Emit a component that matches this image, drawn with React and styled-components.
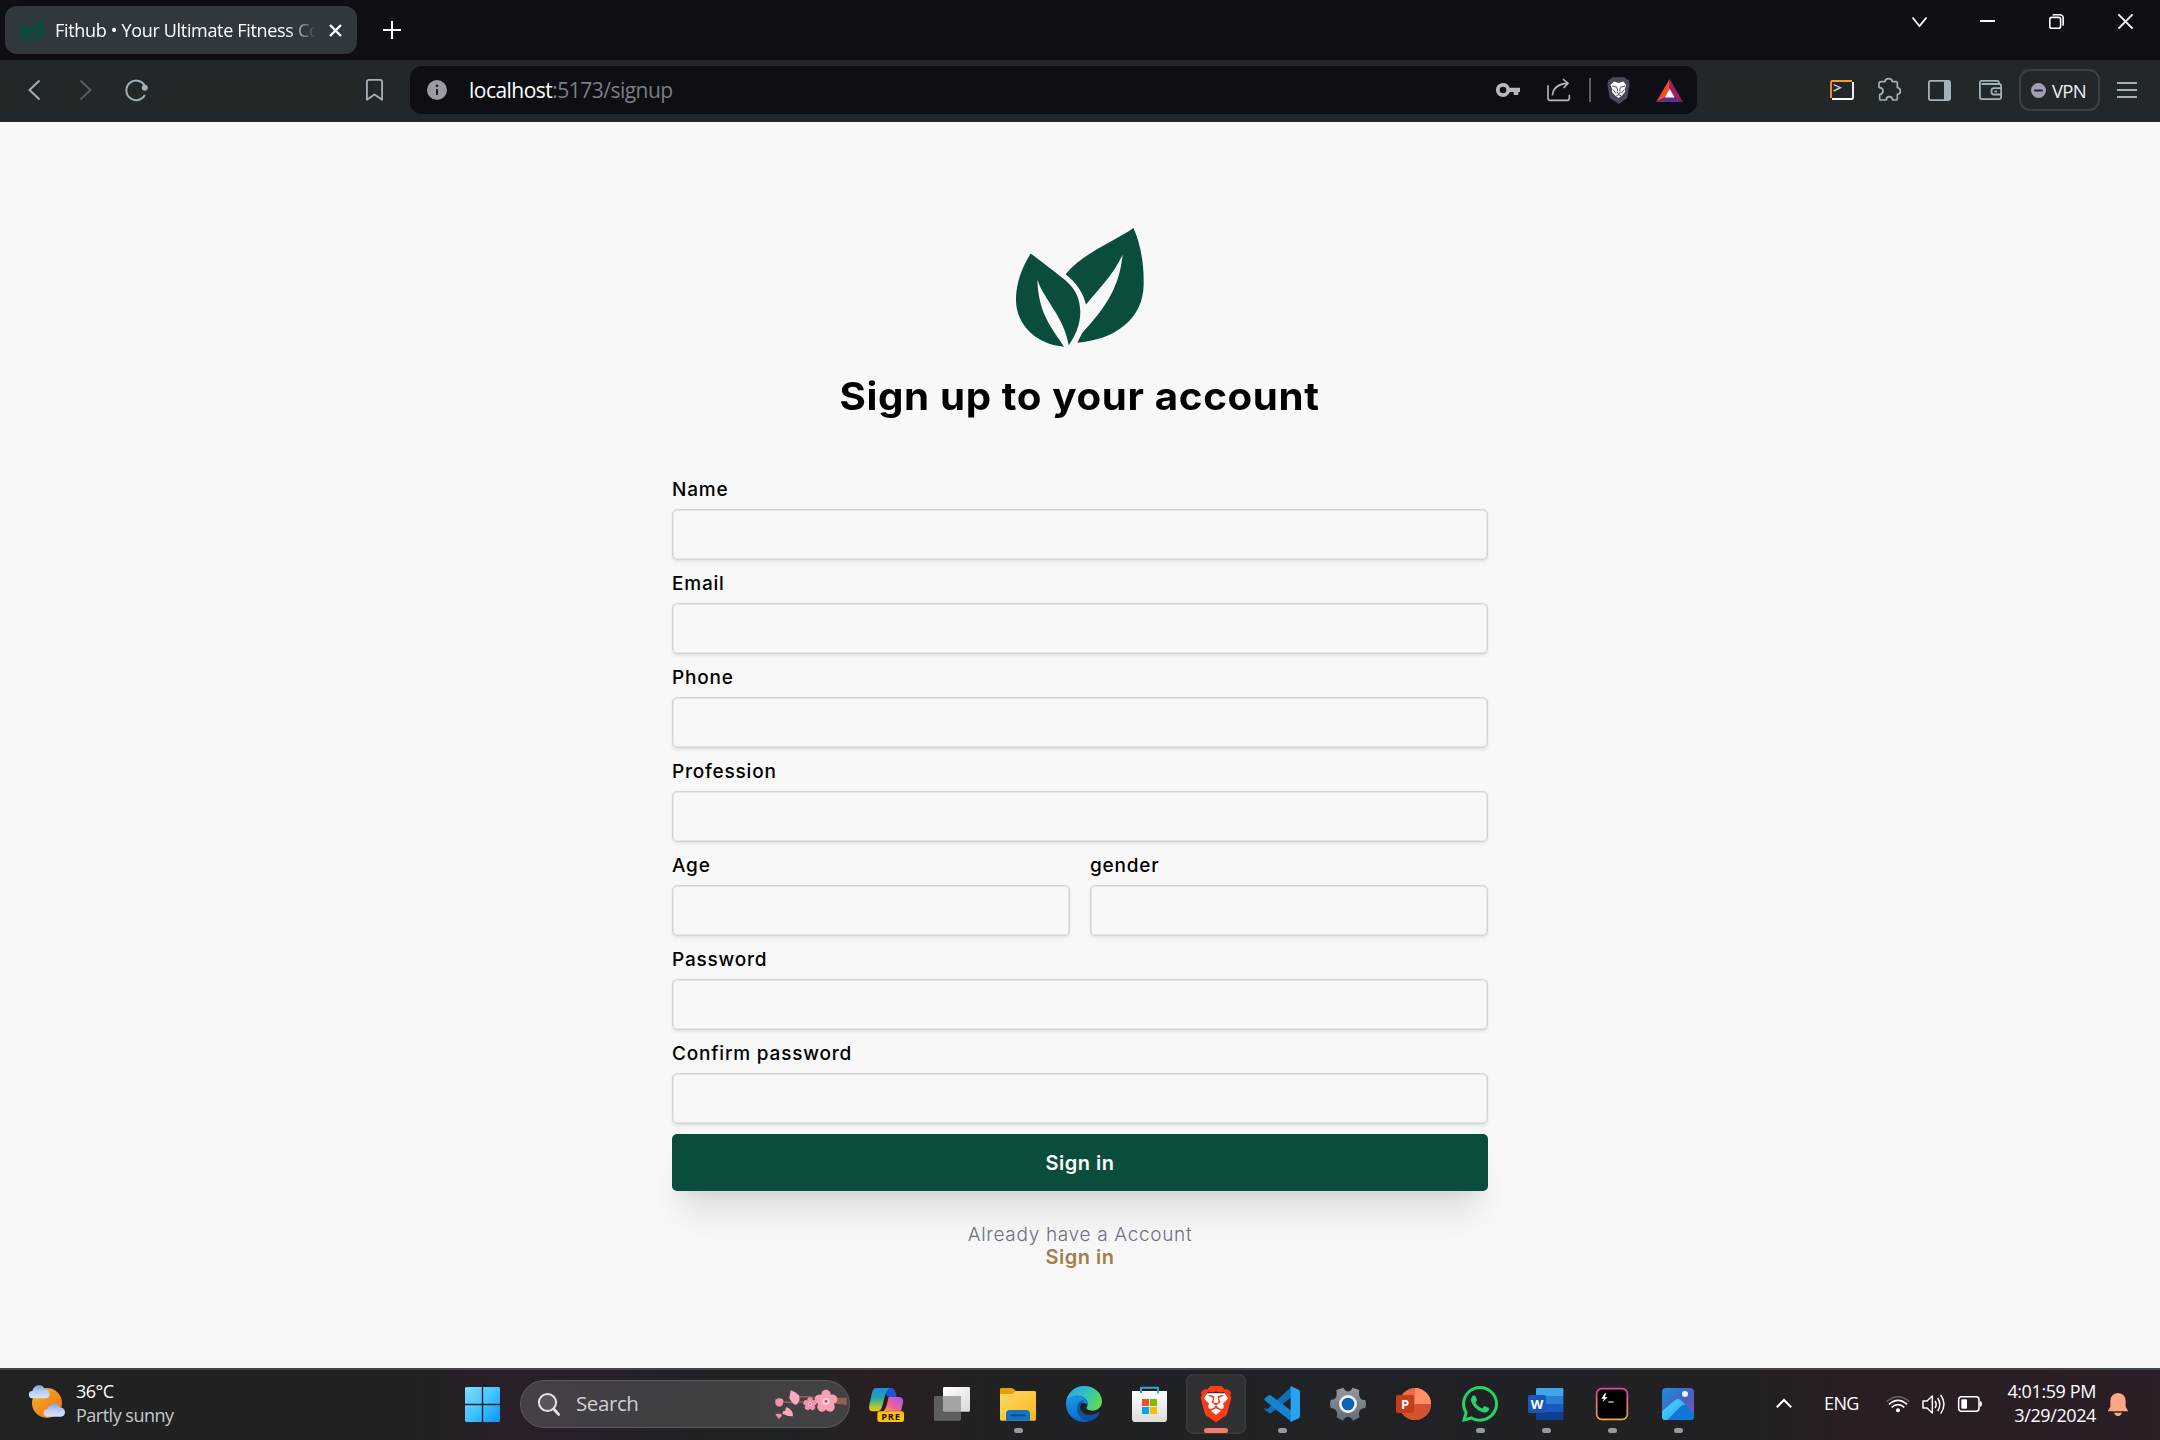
import React from 'react';
import styled, { createGlobalStyle } from 'styled-components';
import { SiBrave } from 'react-icons/si';
import { FaWhatsapp } from 'react-icons/fa';

const GlobalStyle = createGlobalStyle`
  * { box-sizing: border-box; }
  body { margin: 0; background: #f8f8f8; overflow: hidden; }
`;

const uiFont = `'Open Sans', 'Noto Sans', sans-serif`;
const pageFont = `Inter, 'Open Sans', sans-serif`;

const Screen = styled.div`
  width: 2160px;
  height: 1440px;
  display: flex;
  flex-direction: column;
  font-family: ${uiFont};
  overflow: hidden;
`;

const Icon = styled.svg`
  display: block;
  flex: none;
  width: ${p => p.$w}px;
  height: ${p => p.$h}px;
  margin-left: ${p => p.$ml || 0}px;
  margin-top: ${p => p.$mt || 0}px;
  overflow: visible;
  fill: none;
`;

/* ---------- Browser chrome ---------- */

const TabStrip = styled.header`
  height: 60px;
  flex: none;
  display: flex;
  align-items: flex-start;
  background: #0e0f14;
  padding: 6px 27px 0 5px;
`;

const Tab = styled.div`
  width: 352px;
  height: 48px;
  display: flex;
  align-items: center;
  background: #30383d;
  border-radius: 12px;
  padding-left: 14px;
`;

const TabTitle = styled.span`
  width: 262px;
  margin-left: 11px;
  font-size: 18px;
  line-height: 24px;
  letter-spacing: -0.33px;
  color: #fff;
  white-space: nowrap;
  mask-image: linear-gradient(to right, #000 232px, transparent 262px);
`;

const WindowButtons = styled.div`
  margin-left: auto;
  display: flex;
  align-items: flex-start;
`;

const Toolbar = styled.nav`
  height: 62px;
  flex: none;
  display: flex;
  align-items: center;
  background: #22272a;
  padding: 0 0 2px 28px;
`;

const AddressBar = styled.div`
  width: 1287px;
  height: 48px;
  margin-left: 27px;
  display: flex;
  align-items: center;
  background: #0e0f14;
  border-radius: 12px;
  padding-left: 17px;
`;

const Url = styled.div`
  width: 1027px;
  margin-left: 22px;
  font-size: 21px;
  line-height: 30px;
  letter-spacing: -0.52px;
  color: #7c7e83;
  white-space: nowrap;
`;

const Host = styled.span`
  color: #fff;
`;

const Separator = styled.i`
  width: 2px;
  height: 24px;
  margin-left: 18px;
  background: #5d5e62;
`;

const VpnButton = styled.div`
  width: 81px;
  height: 42px;
  margin-left: 17px;
  padding-left: 10px;
  display: flex;
  align-items: center;
  border: 2px solid #374146;
  border-radius: 11px;
  font-size: 18.5px;
  letter-spacing: -0.7px;
  color: #eef0f2;
`;

const VpnText = styled.span`
  margin-left: 6px;
`;

/* ---------- Page ---------- */

const Page = styled.main`
  height: 1246px;
  flex: none;
  display: flex;
  flex-direction: column;
  align-items: center;
  padding-top: 106px;
  background: #f8f8f8;
  font-family: ${pageFont};
`;

const Heading = styled.h1`
  margin: 25px 0 0;
  height: 48px;
  line-height: 48px;
  font-size: 38px;
  font-weight: 700;
  letter-spacing: 0.6px;
  color: #000;
  white-space: nowrap;
  transform: scaleX(1.06);
`;

const Form = styled.form`
  width: 816px;
  margin-top: 58px;
  display: flex;
  flex-direction: column;
`;

const FieldRow = styled.div`
  display: flex;
  gap: 20px;
`;

const Field = styled.label`
  width: 100%;
  height: 94px;
  display: flex;
  flex-direction: column;
  font-size: 19px;
  line-height: 24px;
  font-weight: 500;
  letter-spacing: 0.8px;
  color: #000;
  white-space: nowrap;
`;

const Input = styled.input`
  width: 100%;
  height: 51px;
  margin: 7px 0 0;
  border: 1px solid #d1d5db;
  border-radius: 5px;
  background: transparent;
  box-shadow: inset 0 0 0 1px rgba(209, 213, 219, 0.55), 0 1.5px 3px rgba(0, 0, 0, 0.08);
  outline: none;
`;

const Submit = styled.button`
  height: 57px;
  margin-top: -2px;
  padding: 0;
  border: 0;
  border-radius: 5px;
  background: #0b4d3c;
  color: #fff;
  font-family: ${pageFont};
  font-size: 20px;
  font-weight: 600;
  letter-spacing: 0.5px;
  box-shadow: 0 30px 38px -8px rgba(0, 0, 0, 0.1), 0 12px 15px -9px rgba(0, 0, 0, 0.1);
`;

const Footnote = styled.p`
  margin: 33px 0 0;
  display: flex;
  flex-direction: column;
  align-items: center;
  font-size: 19px;
  line-height: 22px;
  font-weight: 300;
  letter-spacing: 0.68px;
  color: #6b7280;
`;

const SignInLink = styled.a`
  font-size: 20px;
  font-weight: 600;
  letter-spacing: 0.5px;
  color: #a17f4d;
`;

/* ---------- Taskbar ---------- */

const Taskbar = styled.footer`
  height: 72px;
  flex: none;
  display: flex;
  align-items: flex-start;
  border-top: 2px solid #434244;
  background: linear-gradient(90deg, #202224 0%, #212123 19%, #291f28 23%, #281f2b 27%, #202224 33%, #202224 36%, #291f22 41%, #212124 46%, #202225 63%, #212124 79%, #291e24 86%, #2b1e26 100%);
  padding: 4px 31px 0 29px;
`;

const TwoLines = styled.div`
  width: ${p => p.$w}px;
  margin-left: ${p => p.$ml}px;
  margin-top: 5px;
  font-size: 18px;
  line-height: 24px;
  letter-spacing: ${p => p.$ls}px;
  text-align: ${p => p.$align || 'left'};
  color: #fff;
  white-space: nowrap;
`;

const Muted = styled.div`
  color: #c8c8c8;
`;

const SearchBox = styled.div`
  width: 330px;
  height: 48px;
  margin: 6px 0 0 20px;
  padding-left: 17px;
  display: flex;
  align-items: center;
  border: 1.5px solid #5b595d;
  border-radius: 24px;
  background: linear-gradient(90deg, #463e48, #403f42 50%, #424244);
`;

const SearchText = styled.span`
  width: 199px;
  margin: -2px 0 0 16px;
  font-size: 20.5px;
  line-height: 28px;
  letter-spacing: -0.4px;
  color: #cfcfd0;
`;

const Apps = styled.div`
  display: flex;
  margin-left: 3px;
`;

const Slot = styled.div`
  width: 60px;
  height: 60px;
  margin: 0 3px;
  display: flex;
  flex-direction: column;
  align-items: center;
  padding-top: 12px;
  border-radius: 7px;
  background: ${p => (p.$active ? '#2e3032' : 'transparent')};
  box-shadow: ${p => (p.$active ? 'inset 0 0 0 1.5px #383a3c' : 'none')};
`;

const Indicator = styled.i`
  width: ${p => (p.$active ? 24 : 9)}px;
  height: 5px;
  margin-top: 6px;
  border-radius: 2.5px;
  background: ${p => (p.$active ? '#f57c62' : '#9a9a9b')};
`;

const Language = styled.span`
  width: 40px;
  margin: 17px 0 0 32px;
  font-size: 18px;
  line-height: 24px;
  letter-spacing: -0.6px;
  color: #fff;
`;

const LEFT_LEAF = 'M212 161C185 205 168 250 168 300C168 380 235 435 312 440C280 390 235 345 232 240C255 305 312 350 326 436C345 410 361 375 361 335C359 265 318 245 285 217Z';
const RIGHT_LEAF = 'M520 85C470 122 370 158 317 223C348 248 370 278 378 314C410 275 460 225 488 165C478 260 440 320 366 400L352 428C460 420 552 360 551 250C552 195 542 130 520 85Z';

function LeafLogo({ w, h, ...rest }) {
  return (
    <Icon $w={w} $h={h} viewBox="168 85 384 356" preserveAspectRatio="none" {...rest}>
      <path d={LEFT_LEAF} fill="#0b4d3c" />
      <path d={RIGHT_LEAF} fill="#0b4d3c" />
    </Icon>
  );
}

const BigLogo = () => <LeafLogo w={128} h={119} />;

function BraveLion({ size, color, x, y }) {
  return (
    <>
      <path d={`M${x + size * 0.25} ${y + size * 0.2}h${size * 0.5}l${size * 0.14} ${size * 0.22}l${-size * 0.17} ${size * 0.3}l${-size * 0.22} ${size * 0.15}l${-size * 0.22} ${-size * 0.15}l${-size * 0.17} ${-size * 0.3}z`} fill="#fff" />
      <SiBrave x={x} y={y} size={size} color={color} />
    </>
  );
}

function Chrome() {
  return (
    <>
      <TabStrip>
        <Tab>
          <LeafLogo w={25} h={21} />
          <TabTitle>Fithub • Your Ultimate Fitness Co</TabTitle>
          <Icon $w={11} $h={11} $ml={13} viewBox="0 0 10 10">
            <path d="M0 0L10 10M10 0L0 10" stroke="#fff" strokeWidth="2.2" />
          </Icon>
        </Tab>
        <Icon $w={18} $h={18} $ml={26} $mt={15} viewBox="0 0 18 18">
          <path d="M9 0V18M0 9H18" stroke="#fff" strokeWidth="2" />
        </Icon>
        <WindowButtons>
          <Icon $w={15} $h={10} $mt={11} viewBox="0 0 15 10">
            <path d="M0.5 0.5L7.5 9L14.5 0.5" stroke="#fff" strokeWidth="1.8" />
          </Icon>
          <Icon $w={15} $h={2} $ml={53} $mt={14} viewBox="0 0 15 2">
            <path d="M0 1H15" stroke="#fff" strokeWidth="2" />
          </Icon>
          <Icon $w={15} $h={15} $ml={54} $mt={8} viewBox="0 0 15 15">
            <rect x=".8" y="3.4" width="10.8" height="10.8" rx="2" stroke="#fff" strokeWidth="1.6" />
            <path d="M3.6 1.2Q4.2 .8 5 .8H10.5Q14.2 .8 14.2 4.5V10Q14.2 10.9 13.7 11.6" stroke="#fff" strokeWidth="1.6" />
          </Icon>
          <Icon $w={15} $h={15} $ml={54} $mt={8} viewBox="0 0 15 15">
            <path d="M.4 .4L14.6 14.6M14.6 .4L.4 14.6" stroke="#fff" strokeWidth="1.8" />
          </Icon>
        </WindowButtons>
      </TabStrip>
      <Toolbar>
        <Icon $w={12} $h={20} viewBox="0 0 12 20">
          <path d="M11.5 .5L1.5 10L11.5 19.5" stroke="#a3b2ba" strokeWidth="1.9" />
        </Icon>
        <Icon $w={12} $h={20} $ml={40} viewBox="0 0 12 20">
          <path d="M.5 .5L10.5 10L.5 19.5" stroke="#545d62" strokeWidth="1.9" />
        </Icon>
        <Icon $w={23} $h={22} $ml={33} viewBox="0 0 23 22">
          <path d="M19.5 6.2A9.8 9.8 0 1 0 19.8 16" stroke="#a3b2ba" strokeWidth="2" />
          <circle cx="19.8" cy="8.8" r="3" fill="#a3b2ba" />
        </Icon>
        <Icon $w={17} $h={22} $ml={218} viewBox="0 0 17 22">
          <path d="M.9 20.8V3Q.9 .9 3 .9H14Q16.1 .9 16.1 3V20.8L8.5 15.5Z" stroke="#a3b2ba" strokeWidth="1.8" strokeLinejoin="round" />
        </Icon>
        <AddressBar>
          <Icon $w={20} $h={20} viewBox="0 0 20 20">
            <circle cx="10" cy="10" r="10" fill="#9a9ca3" />
            <path d="M10 9V15" stroke="#1c1d22" strokeWidth="2" />
            <circle cx="10" cy="5.8" r="1.3" fill="#1c1d22" />
          </Icon>
          <Url><Host>localhost</Host>:5173/signup</Url>
          <Icon $w={24} $h={14} viewBox="48 69 72 42">
            <path fillRule="evenodd" fill="#b9b9bb" d="M69 69a21 21 0 1 0 20 27h12v9h14V96h5V83H89A21 21 0 0 0 69 69ZM69 80a10 10 0 1 1 0 20a10 10 0 0 1 0-20Z" />
          </Icon>
          <Icon $w={24} $h={24} $ml={27} viewBox="202 56 72 72">
            <path d="M205 78V117Q205 123 211 123H263Q269 123 269 117V106M218 108Q222 74 264 72M250 59L265 72L252 86" stroke="#b9b9bb" strokeWidth="4.8" />
          </Icon>
          <Separator />
          <Icon $w={23} $h={27} $ml={16} viewBox="381 48 69 82">
            <path d="M397 49H434L440 55L447 57L449 72L442 112L416 130L389 112L382 72L384 57L391 55Z" fill="#48495b" />
            <path d="M402 62L415 66L430 62L439 72L434 85L436 92L426 104L416 112L405 104L395 92L397 85L391 72Z" fill="#fff" />
            <path d="M397 76L411 79M435 76L421 79M411 80L413 92M421 80L419 92M410 94L416 98L422 94M416 97V102M400 87L408 98M432 87L424 98M409 105L416 102L423 105" stroke="#48495b" strokeWidth="3" />
          </Icon>
          <Icon $w={27} $h={23} $ml={26} viewBox="529 53 81 70">
            <path d="M570 53L529 123L557 108L570 83Z" fill="#ff4724" />
            <path d="M570 53L610 123L583 108L570 83Z" fill="#9e1f63" />
            <path d="M529 123H610L583 108H557Z" fill="#662d91" />
            <path d="M570 83L585 109H555Z" fill="#fff" />
          </Icon>
        </AddressBar>
        <Icon $w={24} $h={20} $ml={133} viewBox="60 240 72 60">
          <path d="M63 294V247Q63 243 67 243H126" stroke="#fc9c1c" strokeWidth="5.5" />
          <path d="M129 246V293Q129 297 125 297H66" stroke="#fff" strokeWidth="5.5" />
          <path d="M71 254L91 263L71 273" stroke="#c4c7c9" strokeWidth="4.5" />
        </Icon>
        <Icon $w={24} $h={24} $ml={24} viewBox="204 236 72 72">
          <path d="M214 247H225Q226 238 236 238T247 247H258Q262 247 262 251V265Q271 266 271 275T262 285V298Q262 302 258 302H248Q247 292 238 292T229 302H213Q209 302 209 298V286Q219 284 219 275T207 264V251Q208 247 214 247Z" stroke="#a3b2ba" strokeWidth="5" strokeLinejoin="round" />
        </Icon>
        <Icon $w={23} $h={21} $ml={26} viewBox="0 0 23 21">
          <rect x=".9" y=".9" width="21.2" height="19.2" rx="1.5" stroke="#a3b2ba" strokeWidth="1.8" />
          <path d="M16 1H22V20H16Z" fill="#a3b2ba" />
        </Icon>
        <Icon $w={23} $h={20} $ml={28} viewBox="0 0 23 20">
          <path d="M20 4.2V3Q20 .9 18 .9H2.8Q.9 .9 .9 2.8V17Q.9 19.1 3 19.1H20Q22.1 19.1 22.1 17V6Q22.1 4 20 4H2.5M22 8.2H15Q12.5 8.2 12.5 10.7V12Q12.5 14.5 15 14.5H22M15.5 11.4H18" stroke="#a3b2ba" strokeWidth="1.8" />
        </Icon>
        <VpnButton>
          <Icon $w={15} $h={15} viewBox="0 0 15 15">
            <circle cx="7.5" cy="7.5" r="7.5" fill="#a09fb3" />
            <path d="M3.2 7.5H11.8" stroke="#22272a" strokeWidth="2" />
          </Icon>
          <VpnText>VPN</VpnText>
        </VpnButton>
        <Icon $w={20} $h={16} $ml={17} viewBox="0 0 20 16">
          <path d="M0 1H20M0 8H20M0 15H20" stroke="#a3b2ba" strokeWidth="1.8" />
        </Icon>
      </Toolbar>
    </>
  );
}

const TextField = ({ label, type = 'text' }) => (
  <Field>
    {label}
    <Input type={type} />
  </Field>
);

function Signup() {
  return (
    <Page>
      <BigLogo />
      <Heading>Sign up to your account</Heading>
      <Form>
        <TextField label="Name" />
        <TextField label="Email" />
        <TextField label="Phone" />
        <TextField label="Profession" />
        <FieldRow>
          <TextField label="Age" />
          <TextField label="gender" />
        </FieldRow>
        <TextField label="Password" type="password" />
        <TextField label="Confirm password" type="password" />
        <Submit type="button">Sign in</Submit>
      </Form>
      <Footnote>
        Already have a Account
        <SignInLink>Sign in</SignInLink>
      </Footnote>
    </Page>
  );
}

/* Each taskbar drawing sits on a 108-unit square canvas. */
const APPS = [
  {
    name: 'copilot',
    art: (
      <>
        <defs>
          <linearGradient id="cpA" x1="0" y1="0" x2="0" y2="1"><stop offset="0" stopColor="#1b8be8" /><stop offset=".45" stopColor="#2aa6a0" /><stop offset=".8" stopColor="#a5c83c" /><stop offset="1" stopColor="#ffc400" /></linearGradient>
          <linearGradient id="cpB" x1="1" y1="0" x2="0" y2="1"><stop offset="0" stopColor="#a05af0" /><stop offset=".6" stopColor="#f0609a" /><stop offset="1" stopColor="#ff9a50" /></linearGradient>
        </defs>
        <path d="M40 6H72Q82 8 86 33H62L58 30Z" fill="#1e56d8" />
        <path d="M24 6H66Q56 10 52 26L42 62Q38 76 26 76H14Q0 76 4 56L12 20Q16 6 24 6Z" fill="url(#cpA)" />
        <path d="M62 33H92Q108 34 105 50L99 76H46Q52 72 56 58Z" fill="url(#cpB)" />
        <rect x="28" y="76" width="80" height="32" rx="7" fill="#ffc20a" />
        <text x="69" y="102" textAnchor="middle" fontFamily="Open Sans, sans-serif" fontWeight="700" fontSize="28" letterSpacing="2.5" fill="#1a1400">PRE</text>
      </>
    ),
  },
  {
    name: 'task view',
    art: (
      <>
        <defs><linearGradient id="tv" x1="0" y1="0" x2="1" y2="1"><stop offset="0" stopColor="#fff" /><stop offset="1" stopColor="#d9d9d9" /></linearGradient></defs>
        <rect x="27" y="3" width="81" height="74" rx="4" fill="url(#tv)" />
        <rect x="0" y="30" width="81" height="74" rx="4" fill="#5e5e60" />
        <path d="M27 30H77Q81 30 81 34V77H31Q27 77 27 73Z" fill="#a4a4a5" />
      </>
    ),
  },
  {
    name: 'explorer',
    dot: true,
    art: (
      <>
        <defs><linearGradient id="fo" x1="0" y1="0" x2="1" y2="1"><stop offset="0" stopColor="#ffd966" /><stop offset="1" stopColor="#f9b81c" /></linearGradient></defs>
        <path d="M0 10Q0 6 4 6H34Q38 6 42 10L48 15V40H0Z" fill="#e3a008" />
        <path d="M0 24H34Q38 24 42 20L47 15H104Q108 15 108 19V100Q108 104 104 104H4Q0 104 0 100Z" fill="url(#fo)" />
        <path d="M18 104V84Q18 72 30 72H78Q90 72 90 84V104Z" fill="#1373c4" />
        <path d="M34 88H74" stroke="#0b4a8a" strokeWidth="5" strokeLinecap="round" />
      </>
    ),
  },
  {
    name: 'edge',
    art: (
      <>
        <defs>
          <linearGradient id="egA" x1="0" y1=".2" x2="1" y2=".5"><stop offset="0" stopColor="#2aa8e6" /><stop offset=".55" stopColor="#2fc3c0" /><stop offset="1" stopColor="#62d84e" /></linearGradient>
          <linearGradient id="egB" x1="0" y1="0" x2=".4" y2="1"><stop offset="0" stopColor="#1a9de8" /><stop offset="1" stopColor="#0a68cc" /></linearGradient>
        </defs>
        <path d="M0 52A54 54 0 0 1 54 0C88 0 108 24 108 46C108 64 94 74 80 74C68 74 60 70 62 64C68 56 66 40 48 32C30 24 8 32 0 52Z" fill="url(#egA)" />
        <path d="M0 52C6 34 26 26 44 31C58 36 66 46 64 60C58 46 44 48 42 62C40 84 62 100 84 96C74 104 64 108 54 108A54 54 0 0 1 0 52Z" fill="url(#egB)" />
        <path d="M42 62C42 82 64 92 84 84L98 78C102 78 102 82 98 86C88 100 74 106 62 106C44 98 30 82 34 62C36 50 46 42 54 44C46 48 42 54 42 62Z" fill="#12509e" />
      </>
    ),
  },
  {
    name: 'store',
    art: (
      <>
        <defs><linearGradient id="st" x1="0" y1="0" x2="0" y2="1"><stop offset="0" stopColor="#fff" /><stop offset="1" stopColor="#dcdcdc" /></linearGradient></defs>
        <path d="M0 15H105V98Q105 108 95 108H10Q0 108 0 98Z" fill="url(#st)" />
        <path d="M27 22V5H78V22" stroke="#2ea6de" strokeWidth="6" strokeLinejoin="round" />
        <path d="M30 39H51V60H30Z" fill="#f25022" />
        <path d="M54 39H75V60H54Z" fill="#7fba00" />
        <path d="M30 63H51V84H30Z" fill="#00a4ef" />
        <path d="M54 63H75V84H54Z" fill="#ffb900" />
      </>
    ),
  },
  { name: 'brave', dot: true, active: true, art: <BraveLion x={0} y={0} size={108} color="#fb3b16" /> },
  {
    name: 'vscode',
    dot: true,
    art: (
      <>
        <path d="M9 70L78 6L82 0V34L22 80Q18 84 14 80L3 72Q-1 69 3 65Z" fill="#0f6fb5" />
        <path d="M3 36L14 28Q18 25 22 29L82 74V108L76 102L3 44Q-1 40 3 36Z" fill="#1484cf" />
        <path d="M80 0L104 11Q108 13 108 18V90Q108 95 104 97L80 108Z" fill="#29a3f0" />
      </>
    ),
  },
  {
    name: 'settings',
    art: (
      <>
        <defs><linearGradient id="ge" x1="0" y1="0" x2="0" y2="1"><stop offset="0" stopColor="#93999f" /><stop offset="1" stopColor="#626c76" /></linearGradient></defs>
        <path d="M40 5Q46 16 54 16T68 5L88 12Q85 30 92 38Q98 44 106 41Q110 54 106 66Q96 66 90 72Q84 82 89 94L70 104Q62 92 54 92T38 104L20 94Q24 80 17 72Q10 66 2 66Q-2 54 2 41Q12 42 17 36Q22 28 19 12Z" fill="url(#ge)" />
        <circle cx="54" cy="54" r="27" fill="#eef0f2" />
        <circle cx="54" cy="54" r="19" fill="#0b63b4" />
      </>
    ),
  },
  {
    name: 'powerpoint',
    art: (
      <>
        <circle cx="57" cy="54" r="48" fill="#ed6c47" />
        <path d="M57 6A48 48 0 0 1 105 54H57Z" fill="#ff8f6b" />
        <path d="M9 54A48 48 0 0 0 105 54Z" fill="#d35230" />
        <rect x="0" y="27" width="54" height="54" rx="5" fill="#c43e1c" />
        <text x="27" y="68" textAnchor="middle" fontFamily="Open Sans, sans-serif" fontWeight="700" fontSize="39" fill="#fff">P</text>
      </>
    ),
  },
  { name: 'whatsapp', dot: true, art: <FaWhatsapp x={-8} y={-8} size={124} color="#25d366" /> },
  {
    name: 'word',
    dot: true,
    art: (
      <>
        <path d="M28 6H102Q106 6 106 10V30H24V10Q24 6 28 6Z" fill="#41a5ee" />
        <path d="M24 30H106V54H24Z" fill="#2b7cd3" />
        <path d="M24 54H106V78H24Z" fill="#185abd" />
        <path d="M24 78H106V98Q106 102 102 102H28Q24 102 24 98Z" fill="#103f91" />
        <rect x="0" y="27" width="54" height="54" rx="5" fill="#1a56b8" />
        <text x="27" y="68" textAnchor="middle" fontFamily="Open Sans, sans-serif" fontWeight="700" fontSize="39" fill="#fff">W</text>
      </>
    ),
  },
  {
    name: 'hyper',
    dot: true,
    art: (
      <>
        <defs><linearGradient id="hy" x1="0" y1="0" x2="0" y2="1"><stop offset="0" stopColor="#ee3fb0" /><stop offset="1" stopColor="#f6a63a" /></linearGradient></defs>
        <rect x="8" y="8" width="92" height="92" rx="15" fill="#000" stroke="url(#hy)" strokeWidth="5" />
        <path d="M33 22L22 38H30L25 49L41 34H32L37 22Z" fill="#fff" />
        <path d="M43 48H59" stroke="#c8c8c8" strokeWidth="4" />
      </>
    ),
  },
  {
    name: 'photos',
    dot: true,
    art: (
      <>
        <defs>
          <linearGradient id="ph" x1="0" y1="0" x2="1" y2="1"><stop offset="0" stopColor="#1a90dc" /><stop offset=".55" stopColor="#4a5fc0" /><stop offset="1" stopColor="#8a56b0" /></linearGradient>
          <linearGradient id="pm" x1="0" y1="0" x2="1" y2="1"><stop offset="0" stopColor="#4bd5ff" /><stop offset="1" stopColor="#2aa6f0" /></linearGradient>
        </defs>
        <rect x="6" y="6" width="96" height="96" rx="12" fill="url(#ph)" />
        <path d="M20 102L62 62Q72 54 82 62L102 82V92Q102 102 92 102Z" fill="#0f78d4" />
        <path d="M6 76L46 42Q54 36 62 42L76 56Q68 56 60 63L22 102H16Q6 102 6 92Z" fill="url(#pm)" />
        <circle cx="75" cy="24" r="9" fill="#e8f4fb" />
      </>
    ),
  },
];

const Blossom = ({ x, y, r, color = '#f8a3b8' }) => (
  <g transform={`translate(${x} ${y})`}>
    {[0, 72, 144, 216, 288].map(a => (
      <ellipse key={a} cx="0" cy={-r * 0.58} rx={r * 0.42} ry={r * 0.45} fill={color} transform={`rotate(${a})`} />
    ))}
    <circle r={r * 0.3} fill="#fde3ec" />
    <circle r={r * 0.14} fill="#e0466c" />
  </g>
);

function WindowsTaskbar() {
  return (
    <Taskbar>
      <Icon $w={36} $h={33} $mt={11} viewBox="87 75 108 99">
        <defs>
          <linearGradient id="sun" x1="0" y1="0" x2="1" y2="1"><stop offset="0" stopColor="#f9b52c" /><stop offset="1" stopColor="#ec6a10" /></linearGradient>
          <linearGradient id="cloud" x1="0" y1="0" x2="0" y2="1"><stop offset="0" stopColor="#7fa2e0" /><stop offset=".5" stopColor="#bccff2" /><stop offset="1" stopColor="#d7e3f8" /></linearGradient>
        </defs>
        <circle cx="141" cy="129" r="45" fill="url(#sun)" />
        <path d="M98 115A11 11 0 0 1 97 93Q101 76 118 76Q130 77 134 87Q149 88 149 102Q148 115 137 115Z" fill="url(#cloud)" />
        <path d="M142 170A11 11 0 0 1 142 148Q146 131 164 131Q176 132 179 142Q195 143 195 157Q194 170 182 170Z" fill="url(#cloud)" />
      </Icon>
      <TwoLines $w={111} $ml={11} $ls={-0.5}>
        <div>36°C</div>
        <Muted>Partly sunny</Muted>
      </TwoLines>
      <Icon $w={35} $h={35} $ml={278} $mt={13} viewBox="0 0 35 35">
        <defs><linearGradient id="win" gradientUnits="userSpaceOnUse" x1="0" y1="0" x2="35" y2="35"><stop offset="0" stopColor="#85dcff" /><stop offset=".5" stopColor="#42c4ff" /><stop offset="1" stopColor="#0894fb" /></linearGradient></defs>
        <path d="M1 0H16.8V16.8H0V1ZM18.2 0H34L35 1V16.8H18.2ZM0 18.2H16.8V35H1L0 34ZM18.2 18.2H35V34L34 35H18.2Z" fill="url(#win)" />
      </Icon>
      <SearchBox>
        <Icon $w={22} $h={23} viewBox="0 0 22 23">
          <circle cx="9.5" cy="9.5" r="8.6" stroke="#e4e4e5" strokeWidth="2" fill="#5a555c" />
          <path d="M15.8 16L20.6 21.4" stroke="#e4e4e5" strokeWidth="2.8" strokeLinecap="round" />
        </Icon>
        <SearchText>Search</SearchText>
        <Icon $w={71} $h={29} viewBox="975 101 213 87">
          <path d="M1188 126L1150 126L1140 138L1188 144ZM1150 136Q1080 118 1050 122M1090 130Q1040 145 990 134" stroke="#8f6450" strokeWidth="4" />
          <path d="M1188 125L1150 127V139L1188 144Z" fill="#8f6450" />
          <Blossom x={1128} y={135} r={34} color="#fba0b4" />
          <Blossom x={1080} y={143} r={20} color="#f78fa8" />
          <path d="M1022 102Q1036 106 1048 118Q1052 138 1036 146Q1020 134 1018 124Z" fill="#f9a9bb" />
          <path d="M976 130Q988 122 1000 130Q1002 146 990 151Q976 150 976 140Z" fill="#f48fa8" />
          <path d="M1008 152Q1030 160 1029 180Q1012 180 997 172Q998 160 1006 164Z" fill="#f9a9bb" />
          <path d="M976 174Q990 168 996 176Q994 184 986 188Z" fill="#f28ca6" />
        </Icon>
      </SearchBox>
      <Apps>
        {APPS.map(a => (
          <Slot key={a.name} $active={a.active}>
            <Icon $w={36} $h={36} viewBox="0 0 108 108">{a.art}</Icon>
            {a.dot && <Indicator $active={a.active} />}
          </Slot>
        ))}
      </Apps>
      <Icon $w={16} $h={9} $ml={65} $mt={25} viewBox="0 0 16 9">
        <path d="M.8 8.2L8 1L15.2 8.2" stroke="#fff" strokeWidth="2" />
      </Icon>
      <Language>ENG</Language>
      <Icon $w={24} $h={18} $ml={22} $mt={21} viewBox="438 104 72 54">
        <path d="M440 124Q474 94 508 124" stroke="#6b6469" strokeWidth="4.5" />
        <path d="M447 132Q474 108 501 132M455 141Q474 125 493 141" stroke="#fff" strokeWidth="5" />
        <circle cx="474" cy="150" r="6" fill="#fff" />
      </Icon>
      <Icon $w={24} $h={21} $ml={12} $mt={20} viewBox="545 101 72 63">
        <path d="M548 122H560L576 107V158L560 143H548ZM584 122Q591 132 584 143M592 113Q605 132 592 152M601 104Q621 132 601 160" stroke="#fff" strokeWidth="4.5" strokeLinejoin="round" />
      </Icon>
      <Icon $w={24} $h={16} $ml={12} $mt={22} viewBox="654 108 72 48">
        <rect x="656" y="110" width="61" height="44" rx="9" stroke="#fff" strokeWidth="4.5" />
        <rect x="664" y="118" width="17" height="28" rx="2" fill="#fff" />
        <path d="M719 124H722Q726 125 726 132T722 140H719Z" fill="#fff" />
      </Icon>
      <TwoLines $w={106} $ml={8} $ls={-0.4} $align="right">
        <div>4:01:59 PM</div>
        <div>3/29/2024</div>
      </TwoLines>
      <Icon $w={20} $h={23} $ml={12} $mt={19} viewBox="1104 99 60 69">
        <path d="M1134 99Q1157 101 1157 124V140L1164 152V154H1104V152L1111 140V124Q1111 101 1134 99ZM1122 158H1146Q1142 168 1134 168T1122 158Z" fill="#fda683" />
      </Icon>
    </Taskbar>
  );
}

export default function App() {
  return (
    <Screen>
      <GlobalStyle />
      <Chrome />
      <Signup />
      <WindowsTaskbar />
    </Screen>
  );
}
